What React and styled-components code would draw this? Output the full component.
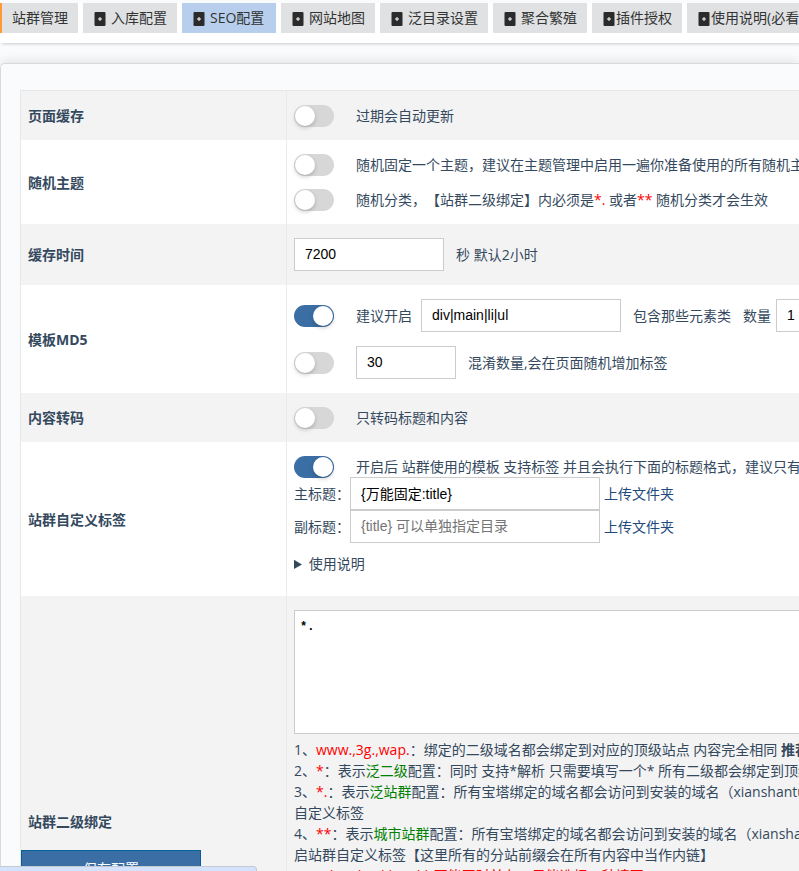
import React, { useState } from "react";
import styled, { createGlobalStyle, css } from "styled-components";

const GlobalStyle = createGlobalStyle`
  * {
    box-sizing: border-box;
  }

  html,
  body {
    margin: 0;
    height: 100%;
    overflow: hidden;
  }

  body {
    background-color: #fafbfd;
    color: #34495e;
    font-family: "Open Sans", "Noto Sans CJK SC", sans-serif;
    font-size: 14px;
    line-height: 21px;
    text-spacing-trim: space-all;
  }
`;

const NavBar = styled.nav`
  display: flex;
  gap: 5px;
  height: 43px;
  padding-top: 3px;
  white-space: nowrap;
  background: linear-gradient(#fafbfd 3px, #ffffff 3px);
  box-shadow: 2px 1px 3px rgba(0, 0, 0, 0.2);
`;

const NavLink = styled.a`
  display: flex;
  flex: none;
  align-items: center;
  gap: 4px;
  height: 30px;
  min-width: 94px;
  padding: 0 10px 2px;
  color: #333333;
  text-decoration: none;
  background-color: #dfe1e3;

  ${(props) =>
    props.$tight &&
    css`
      gap: 0;
      min-width: 90px;
    `}

  ${(props) =>
    props.$first &&
    css`
      min-width: 0;
      border-left: 2px solid #ff9933;
    `}

  ${(props) =>
    props.$active &&
    css`
      background-color: #b7cfec;
    `}
`;

const Panel = styled.main`
  margin-top: 20px;
  padding: 26px 0 0 19px;
  border: 1px solid #d8dbde;
  border-right: 0;
  border-radius: 5px 0 0 0;
  box-shadow: 0 -2px 12px rgba(0, 0, 0, 0.1);
  overflow: hidden;
`;

const ConfigTable = styled.table`
  width: 100%;
  border-collapse: separate;
  border-spacing: 0;
  border-top: 1px solid #e6e7e9;
  border-left: 1px solid #e6e7e9;
`;

const Row = styled.tr`
  background-color: #ffffff;

  &:nth-child(odd) {
    background-color: #f3f3f3;
  }
`;

const HeadCell = styled.th`
  width: 266px;
  padding: 14px 7px;
  text-align: left;
  font-weight: bold;
  border-right: 1px solid #ebebeb;
`;

const Cell = styled.td`
  max-width: 0;
  padding: ${(props) => (props.$loose ? "14px 7px 22px" : "14px 7px")};
  white-space: nowrap;
`;

const Line = styled.div`
  display: flex;
  align-items: center;
  gap: ${(props) => props.$gap || "12px"};
  margin-top: ${(props) => (props.$spaced ? "14px" : "0")};
`;

const ToggleLabel = styled.label`
  display: flex;
  align-items: center;
  gap: 22px;
`;

/* the switch is 1px taller than a text line, the margin keeps the line at 21px */
const Toggle = styled.input.attrs({ type: "checkbox", role: "switch" })`
  appearance: none;
  flex: none;
  display: flex;
  width: 40px;
  height: 22px;
  margin: 0 0 -1px;
  padding: 1px;
  border-radius: 11px;
  background-color: #d7d7d7;

  &::before {
    content: "";
    width: 20px;
    height: 20px;
    border-radius: 50%;
    background-color: #ffffff;
    box-shadow: 0 2px 4px rgba(0, 0, 0, 0.2);
  }

  &:checked {
    justify-content: flex-end;
    background-color: #3b6ea5;
  }
`;

const TextBox = styled.input`
  flex: none;
  width: ${(props) => props.$width};
  height: 33px;
  padding: 0 10px 2px;
  color: #000000;
  font-family: "Liberation Sans", "Noto Sans CJK SC", sans-serif;
  font-size: 14px;
  border: 1px solid #cccccc;
  border-radius: 0;
  background-color: #ffffff;

  &::placeholder {
    color: #757575;
  }
`;

const UploadLink = styled.a`
  color: #20497d;
  text-decoration: none;
`;

const Usage = styled.details`
  margin-top: 10px;
`;

const DomainBox = styled.textarea`
  display: block;
  width: 800px;
  height: 124px;
  margin-bottom: 5px;
  padding: 7px 5px;
  color: #000000;
  font-family: "Liberation Mono", "Noto Sans CJK SC", monospace;
  font-size: 12px;
  font-weight: bold;
  line-height: 18px;
  border: 1px solid #cccccc;
  border-radius: 0;
  resize: none;
`;

const Rules = styled.div`
  min-height: 294px;
`;

const Red = styled.span`
  color: #ff0000;
`;

const Green = styled.span`
  color: #008000;
`;

const SaveBar = styled.div`
  position: fixed;
  left: 21px;
  bottom: -14px;
`;

const SaveButton = styled.button`
  width: 180px;
  height: 35px;
  color: #ffffff;
  font-family: inherit;
  font-size: 14px;
  border: 1px solid #046095;
  background-color: #3b6ea5;
`;

const StatusBubble = styled.div`
  position: fixed;
  left: 0;
  bottom: 0;
  width: 257px;
  height: 5px;
  border-top: 1px solid #c6cad0;
  border-right: 1px solid #c6cad0;
  border-radius: 0 4px 0 0;
  background-color: #d3e3fd;
`;

const NAV_ITEMS = [
  { text: "站群管理", first: true },
  { text: "入库配置" },
  { text: "SEO配置", active: true },
  { text: "网站地图" },
  { text: "泛目录设置" },
  { text: "聚合繁殖" },
  { text: "插件授权", tight: true },
  { text: "使用说明(必看)", tight: true },
];

const PlusIcon = () => (
  <svg width="14" height="18" viewBox="0 0 14 18" aria-hidden="true">
    <rect x="1.5" y="4" width="11" height="14" rx="1" fill="#2b2b2b" />
    <path d="M7 9v4M5 11h4" stroke="#ffffff" strokeWidth="1" />
  </svg>
);

const Switch = ({ on, name, children }) => {
  const [checked, setChecked] = useState(Boolean(on));

  return (
    <ToggleLabel>
      <Toggle
        aria-label={name}
        checked={checked}
        onChange={() => setChecked(!checked)}
      />
      {children}
    </ToggleLabel>
  );
};

const App = () => {
  return (
    <>
      <GlobalStyle />
      <NavBar>
        {NAV_ITEMS.map((item) => (
          <NavLink
            key={item.text}
            href="#"
            $first={item.first}
            $active={item.active}
            $tight={item.tight}
          >
            {!item.first && <PlusIcon />}
            {item.text}
          </NavLink>
        ))}
      </NavBar>
      <Panel>
        <ConfigTable>
          <tbody>
            <Row>
              <HeadCell scope="row">页面缓存</HeadCell>
              <Cell>
                <Switch>过期会自动更新</Switch>
              </Cell>
            </Row>
            <Row>
              <HeadCell scope="row">随机主题</HeadCell>
              <Cell>
                <Line>
                  <Switch>
                    随机固定一个主题，建议在主题管理中启用一遍你准备使用的所有随机主题
                  </Switch>
                </Line>
                <Line $spaced>
                  <Switch>
                    <span>
                      随机分类，【站群二级绑定】内必须是<Red>*.</Red> 或者
                      <Red>**</Red> 随机分类才会生效
                    </span>
                  </Switch>
                </Line>
              </Cell>
            </Row>
            <Row>
              <HeadCell scope="row">缓存时间</HeadCell>
              <Cell>
                <Line>
                  <TextBox id="cacheTime" $width="150px" defaultValue="7200" />
                  <label htmlFor="cacheTime">秒 默认2小时</label>
                </Line>
              </Cell>
            </Row>
            <Row>
              <HeadCell scope="row">模板MD5</HeadCell>
              <Cell>
                <Line>
                  <Line $gap="9px">
                    <Switch on>建议开启</Switch>
                    <TextBox
                      id="tags"
                      $width="200px"
                      defaultValue="div|main|li|ul"
                    />
                  </Line>
                  <label htmlFor="tags">包含那些元素类</label>
                  <Line $gap="5px">
                    <label htmlFor="tagCount">数量</label>
                    <TextBox id="tagCount" $width="100px" defaultValue="1" />
                  </Line>
                </Line>
                <Line $spaced>
                  <Line $gap="22px">
                    <Switch name="混淆" />
                    <TextBox id="mixCount" $width="100px" defaultValue="30" />
                  </Line>
                  <label htmlFor="mixCount">
                    混淆数量,会在页面随机增加标签
                  </label>
                </Line>
              </Cell>
            </Row>
            <Row>
              <HeadCell scope="row">内容转码</HeadCell>
              <Cell>
                <Switch>只转码标题和内容</Switch>
              </Cell>
            </Row>
            <Row>
              <HeadCell scope="row">站群自定义标签</HeadCell>
              <Cell $loose>
                <Switch on>
                  开启后 站群使用的模板 支持标签
                  并且会执行下面的标题格式，建议只有一个模板时开启
                </Switch>
                <Line $gap="4px">
                  <Line $gap="0">
                    <label htmlFor="mainTitle">主标题：</label>
                    <TextBox
                      id="mainTitle"
                      $width="250px"
                      defaultValue="{万能固定:title}"
                    />
                  </Line>
                  <UploadLink href="#">上传文件夹</UploadLink>
                </Line>
                <Line $gap="4px">
                  <Line $gap="0">
                    <label htmlFor="subTitle">副标题：</label>
                    <TextBox
                      id="subTitle"
                      $width="250px"
                      placeholder="{title} 可以单独指定目录"
                    />
                  </Line>
                  <UploadLink href="#">上传文件夹</UploadLink>
                </Line>
                <Usage>
                  <summary>使用说明</summary>
                </Usage>
              </Cell>
            </Row>
            <Row>
              <HeadCell scope="row">站群二级绑定</HeadCell>
              <Cell>
                <DomainBox aria-label="站群二级绑定" defaultValue="*." />
                <Rules>
                  1、<Red>www.,3g.,wap.</Red>
                  ：绑定的二级域名都会绑定到对应的顶级站点 内容完全相同{" "}
                  <b>推荐</b>
                  <br />
                  2、<Red>*</Red>：表示<Green>泛二级</Green>配置：同时
                  支持*解析 只需要填写一个* 所有二级都会绑定到顶级站点
                  <br />
                  3、<Red>*.</Red>：表示<Green>泛站群</Green>
                  配置：所有宝塔绑定的域名都会访问到安装的域名（xianshantu.com）
                  <br />
                  自定义标签
                  <br />
                  4、<Red>**</Red>：表示<Green>城市站群</Green>
                  配置：所有宝塔绑定的域名都会访问到安装的域名（xianshantu.com）
                  <br />
                  启站群自定义标签【这里所有的分站前缀会在所有内容中当作内链】
                  <br />
                  <Red>5、1.*/ 2.* 3.**/ 4.** 不能同时并存，只能选择一种填写</Red>
                </Rules>
              </Cell>
            </Row>
          </tbody>
        </ConfigTable>
      </Panel>
      <SaveBar>
        <SaveButton type="button">保存配置</SaveButton>
      </SaveBar>
      <StatusBubble />
    </>
  );
};

export default App;
